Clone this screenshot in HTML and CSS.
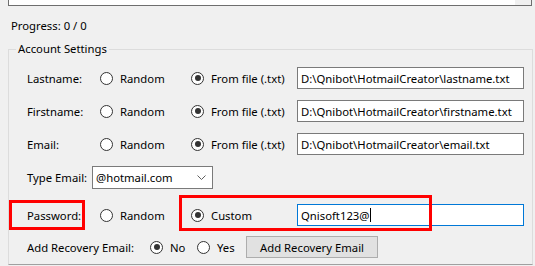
FILE: index.html
```html
<!DOCTYPE html>
<html lang="en">
  <head>
    <meta charset="UTF-8" />
    <meta name="viewport" content="width=device-width, initial-scale=1.0" />
    <title>Hotmail Creator</title>
    <link rel="stylesheet" href="styles.css">
  </head>
  <body>
    <div class="log"><div class="scroll"></div></div>

    <div class="progress">Progress: 0 / 0</div>

    <div class="group">
      <div class="legend">Account Settings</div>

      <div class="row first">
        <span class="label">Lastname:</span>
        <label class="radio col1"><span class="dot"></span>Random</label>
        <label class="radio col2"><span class="dot on"></span>From file (.txt)</label>
        <div class="field">D:\Qnibot\HotmailCreator\lastname.txt</div>
      </div>

      <div class="row">
        <span class="label">Firstname:</span>
        <label class="radio col1"><span class="dot"></span>Random</label>
        <label class="radio col2"><span class="dot on"></span>From file (.txt)</label>
        <div class="field">D:\Qnibot\HotmailCreator\firstname.txt</div>
      </div>

      <div class="row">
        <span class="label">Email:</span>
        <label class="radio col1"><span class="dot"></span>Random</label>
        <label class="radio col2"><span class="dot on"></span>From file (.txt)</label>
        <div class="field">D:\Qnibot\HotmailCreator\email.txt</div>
      </div>

      <div class="row type-row">
        <span class="label short">Type Email:</span>
        <div class="combo">
          <span>@hotmail.com</span>
          <svg width="9" height="5" viewBox="0 0 9 5">
            <path d="M0.5 0.5 L4.5 4.5 L8.5 0.5" fill="none" stroke="#606060" stroke-width="1" />
          </svg>
        </div>
      </div>

      <div class="row pass-row">
        <span class="label">Password:</span>
        <label class="radio col1"><span class="dot"></span>Random</label>
        <label class="radio col2"><span class="dot on"></span>Custom</label>
        <div class="field focus">Qnisoft123@<span class="caret"></span></div>
      </div>

      <div class="row rec-row">
        <span class="label long">Add Recovery Email:</span>
        <label class="radio no"><span class="dot on"></span>No</label>
        <label class="radio yes"><span class="dot"></span>Yes</label>
        <button class="btn">Add Recovery Email</button>
      </div>

      <!-- red highlight marks -->
      <div class="mark mark-label"></div>
      <div class="mark mark-custom"></div>
    </div>
  </body>
</html>
```

FILE: styles.css
```css
body {
  margin: 0;
  height: 266px;
  overflow: hidden;
  background-color: #f0f0f0;
  font-family: "Noto Sans", "Open Sans", sans-serif;
  font-size: 11.3px;
  color: #000;
}

.log {
  display: flex;
  justify-content: flex-end;
  height: 5px;
  margin: 0 3px 0 8px;
  background-color: #fff;
  border: 1px solid #6e6e6e;
  border-top: none;
}

.log .scroll {
  width: 16px;
  background-color: #f0f0f0;
}

.progress {
  height: 16px;
  margin: 12px 0 0 11px;
  line-height: 16px;
}

.group {
  position: relative;
  margin: 15px 2px 0 8px;
  padding: 0 0 6px 18px;
  border: 1px solid #dcdcdc;
  border-bottom-color: #a0a0a0;
}

.legend {
  width: max-content;
  height: 16px;
  margin: -9px 0 0 -11px;
  padding: 0 2px;
  line-height: 16px;
  background-color: #f0f0f0;
}

.row {
  display: flex;
  align-items: center;
  height: 22px;
  margin-top: 11px;
}

.row.first {
  margin-top: 10px;
}

.label {
  width: 73px;
}

.label.short {
  width: 65px;
}

.label.long {
  width: 123px;
}

.radio {
  display: flex;
  align-items: center;
  gap: 7px;
}

.col1 {
  width: 91px;
}

.col2 {
  width: 106px;
}

.no {
  width: 47px;
}

.yes {
  width: 49px;
}

.dot {
  display: flex;
  justify-content: center;
  align-items: center;
  box-sizing: border-box;
  width: 13px;
  height: 13px;
  border: 1px solid #333;
  border-radius: 50%;
  background-color: #fff;
}

.dot.on::after {
  content: "";
  width: 6px;
  height: 6px;
  border-radius: 50%;
  background-color: #333;
}

.field {
  display: flex;
  align-items: center;
  box-sizing: border-box;
  width: 227px;
  height: 22px;
  padding-left: 3px;
  border: 1px solid #7a7a7a;
  background-color: #fff;
  white-space: nowrap;
}

.field.focus {
  border-color: #0078d7;
}

.caret {
  display: inline-block;
  width: 1px;
  height: 14px;
  margin-left: 1px;
  background-color: #000;
}

.type-row {
  height: 23px;
}

.combo {
  display: flex;
  align-items: center;
  justify-content: space-between;
  box-sizing: border-box;
  width: 121px;
  height: 23px;
  padding: 0 6px 0 3px;
  border: 1px solid #7a7a7a;
  background-color: #fff;
}

.pass-row {
  margin-top: 15px;
}

.rec-row {
  margin-top: 10px;
}

.btn {
  box-sizing: border-box;
  width: 132px;
  height: 22px;
  padding: 0;
  border: 1px solid #adadad;
  background-color: #e1e1e1;
  font-family: inherit;
  font-size: 11.3px;
  color: #000;
}

.mark {
  position: absolute;
  box-sizing: border-box;
  border: 3px solid #ff0000;
}

.mark-label {
  left: 0;
  top: 150px;
  width: 76px;
  height: 30px;
}

.mark-custom {
  left: 170px;
  top: 145px;
  width: 253px;
  height: 36px;
}
```
